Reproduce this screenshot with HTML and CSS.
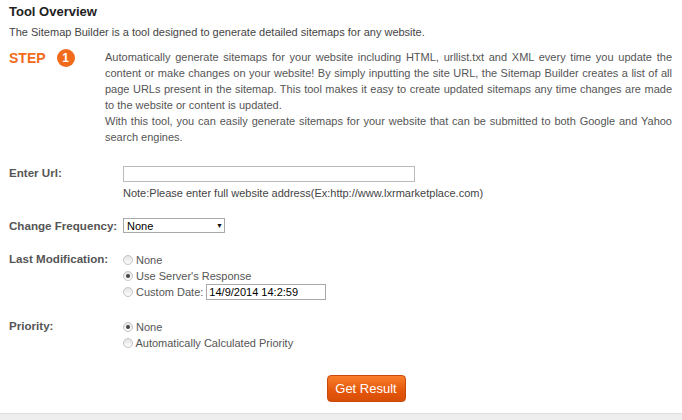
FILE: index.html
```html
<!DOCTYPE html>
<html>
<head>
<meta charset="utf-8">
<link rel="stylesheet" href="styles.css">
</head>
<body>
<div class="page">
  <h1 class="title">Tool Overview</h1>
  <p class="intro">The Sitemap Builder is a tool designed to generate detailed sitemaps for any website.</p>
  <div class="step">
    <div class="step-mark"><span class="step-word">STEP</span><span class="step-num">1</span></div>
    <div class="step-text">
      <p>Automatically generate sitemaps for your website including HTML, urllist.txt and XML every time you update the content or make changes on your website! By simply inputting the site URL, the Sitemap Builder creates a list of all page URLs present in the sitemap. This tool makes it easy to create updated sitemaps any time changes are made to the website or content is updated.</p>
      <p>With this tool, you can easily generate sitemaps for your website that can be submitted to both Google and Yahoo search engines.</p>
    </div>
  </div>

  <div class="form">
    <div class="row row-url">
      <label class="lbl">Enter Url:</label>
      <div class="field">
        <input class="url" type="text">
        <div class="note">Note:Please enter full website address(Ex:http://www.lxrmarketplace.com)</div>
      </div>
    </div>
    <div class="row row-freq">
      <label class="lbl">Change Frequency:</label>
      <div class="field">
        <span class="sel"><select><option>None</option></select></span>
      </div>
    </div>
    <div class="row row-mod">
      <label class="lbl">Last Modification:</label>
      <div class="field opts">
        <label class="opt"><input type="radio" name="m"> None</label>
        <label class="opt"><input type="radio" name="m" checked> Use Server's Response</label>
        <label class="opt"><input type="radio" name="m"> Custom Date: <input class="date" type="text" value="14/9/2014 14:2:59"></label>
      </div>
    </div>
    <div class="row row-pri">
      <label class="lbl">Priority:</label>
      <div class="field opts">
        <label class="opt"><input type="radio" name="p" checked> None</label>
        <label class="opt"><input type="radio" name="p"> Automatically Calculated Priority</label>
      </div>
    </div>
    <div class="actions"><button class="btn">Get Result</button></div>
  </div>
</div>
<div class="foot"></div>
</body>
</html>
```
FILE: styles.css
```css
html, body { margin: 0; padding: 0; background: #fff; }
body { font-family: "Liberation Sans", Arial, sans-serif; color: #555; width: 682px; height: 420px; overflow: hidden; display: flex; flex-direction: column; }
.page { padding: 4px 9px 0 9px; flex: 1; }
.title { margin: 0; font-size: 13px; font-weight: bold; color: #222; line-height: 16px; }
.intro { margin: 5px 0 0; font-size: 11px; line-height: 14px; color: #444; }
.step { display: flex; margin-top: 10px; }
.step-mark { width: 96px; flex: none; display: flex; align-items: center; height: 18px; }
.step-word { color: #f26a1b; font-weight: bold; font-size: 14px; }
.step-num { margin-left: 11px; width: 18px; height: 18px; border-radius: 50%; background: #f26a1b; color: #fff; font-weight: bold; font-size: 12px; line-height: 18px; text-align: center; }
.step-text { flex: 1; font-size: 11px; line-height: 16px; color: #555; text-align: justify; padding-right: 1px; }
.step-text p { margin: 0; }
.form { margin-top: 21px; }
.row { display: flex; }
.lbl { width: 114px; flex: none; font-weight: bold; font-size: 11.6px; color: #555; }
.field { font-size: 11px; }
.row-url .lbl { line-height: 13px; }
.url { display: block; box-sizing: border-box; width: 292px; height: 16px; border: 1px solid #bbb; padding: 0 2px; margin: 0; }
.note { margin-top: 4px; line-height: 14px; color: #444; }
.row-freq { margin-top: 18px; }
.row-freq .lbl { line-height: 15px; }
.sel { position: relative; display: block; }
.sel select { appearance: none; -webkit-appearance: none; box-sizing: border-box; width: 102px; height: 15px; border: 1px solid #aaa; border-radius: 0; background: #fff; font: 11px "Liberation Sans", Arial, sans-serif; color: #000; padding: 0 0 0 3px; margin: 0; display: block; }
.sel::after { content: "\25BC"; position: absolute; left: 93px; top: 0; font-size: 7px; line-height: 15px; color: #111; pointer-events: none; }
.row-mod { margin-top: 19px; }
.row-mod .lbl, .row-pri .lbl { line-height: 14px; }
.opts { display: flex; flex-direction: column; }
.opt { display: flex; align-items: center; height: 16px; line-height: 16px; color: #555; white-space: pre; }
.opt input[type=radio] { appearance: none; -webkit-appearance: none; width: 10px; height: 10px; margin: 0; border-radius: 50%; border: 1px solid #c4c4c4; background: linear-gradient(#e4e4e4, #fdfdfd); box-sizing: border-box; position: relative; flex: none; }
.opt input[type=radio]:checked::after { content: ""; position: absolute; left: 2px; top: 2px; width: 4px; height: 4px; border-radius: 50%; background: #444; }
.date { box-sizing: border-box; width: 120px; height: 16px; border: 1px solid #aaa; margin: 0; padding: 0 2px; font: 11px "Liberation Sans", Arial, sans-serif; color: #000; }
.row-pri { margin-top: 19px; }
.actions { display: flex; justify-content: center; margin-top: 24px; padding-left: 50px; }
.btn { width: 79px; height: 27px; border: 1px solid #c84a0c; border-radius: 4px; background: linear-gradient(#f97e2a, #e4570b 60%, #d84d06); color: #fff; font: 13px "Liberation Sans", Arial, sans-serif; padding: 0; }
.foot { height: 6px; background: #eee; border-top: 1px solid #ddd; flex: none; }
```
